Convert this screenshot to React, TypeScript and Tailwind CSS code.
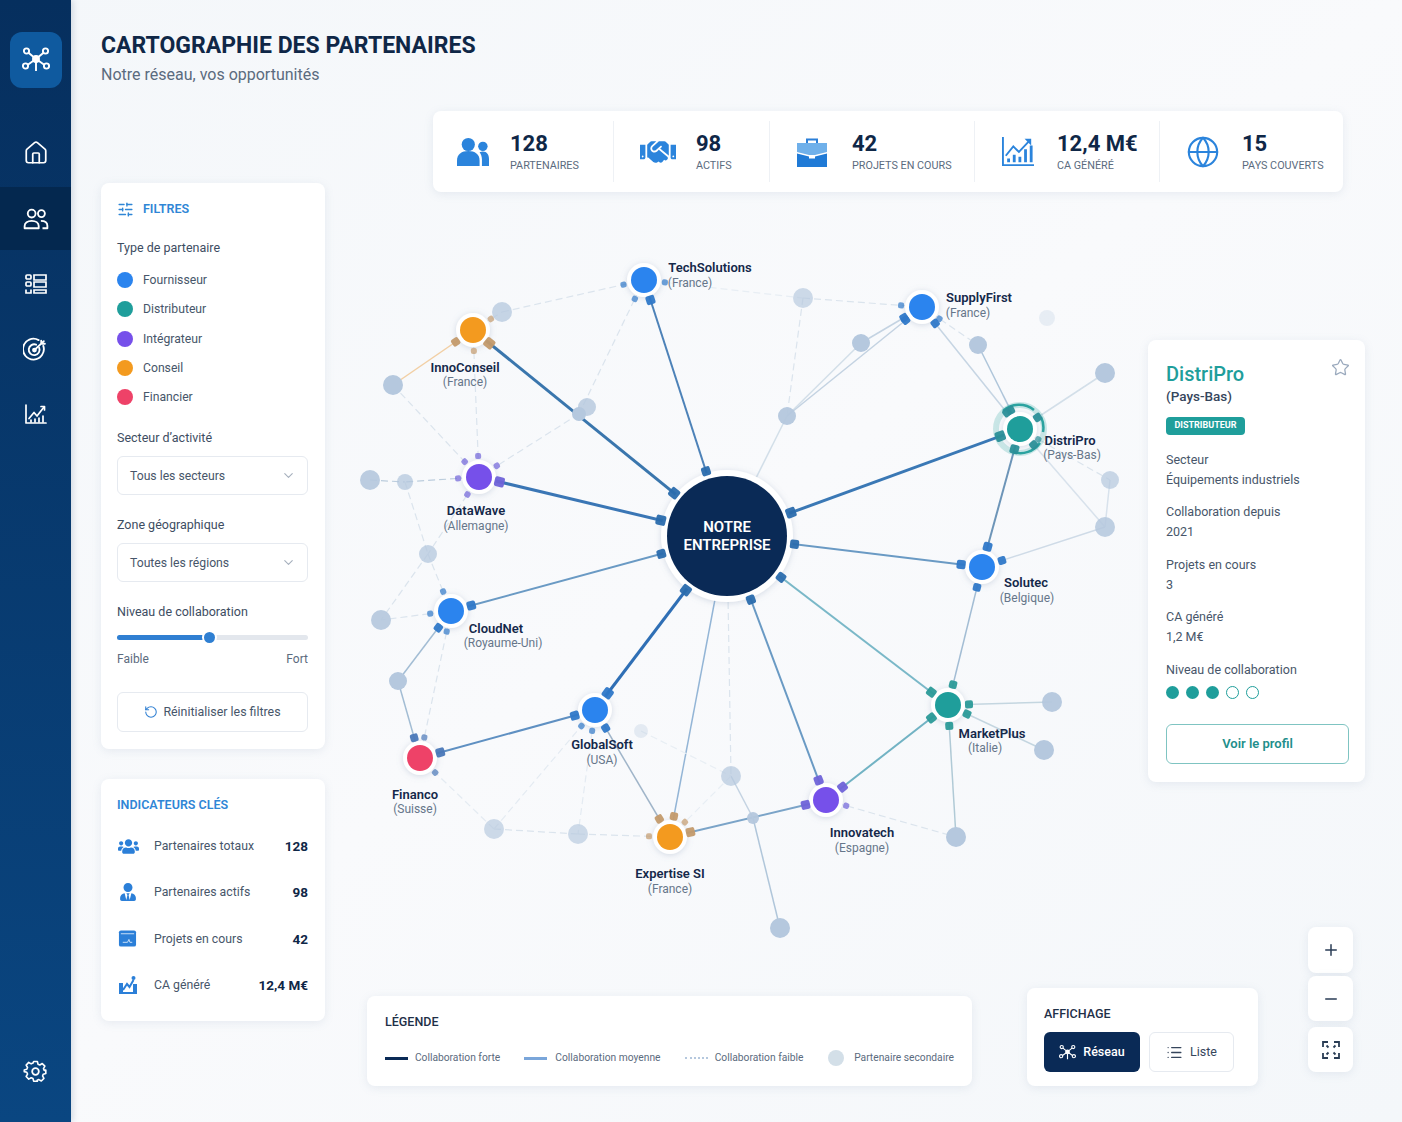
import { ChevronDown, Globe, Home, List, Minus, Plus, RotateCcw, SlidersHorizontal, Star } from 'lucide-react'
import { FaHandshake, FaUsers, FaUserTie } from 'react-icons/fa'
import type { ReactNode } from 'react'

type NodeId = string

interface PartnerNode {
  id: NodeId
  x: number
  y: number
  color: string
  port: string
}

const ORIGIN_X = 325
const ORIGIN_Y = 192

const partners: PartnerNode[] = [
  { id: 'tech', x: 644, y: 280, color: '#2b84ee', port: '#2f78c8' },
  { id: 'supply', x: 922, y: 307, color: '#2b84ee', port: '#2f78c8' },
  { id: 'inno', x: 473, y: 330, color: '#f39a1f', port: '#c39a6c' },
  { id: 'distri', x: 1020, y: 429, color: '#1f9e9b', port: '#2b8f98' },
  { id: 'data', x: 479, y: 477, color: '#7650ea', port: '#6f63d8' },
  { id: 'solutec', x: 982, y: 567, color: '#2b84ee', port: '#2f78c8' },
  { id: 'cloud', x: 451, y: 611, color: '#2b84ee', port: '#2f78c8' },
  { id: 'global', x: 595, y: 710, color: '#2b84ee', port: '#2f78c8' },
  { id: 'market', x: 948, y: 705, color: '#1f9e9b', port: '#2b9a98' },
  { id: 'financo', x: 420, y: 758, color: '#ee4268', port: '#4a78b8' },
  { id: 'innova', x: 826, y: 800, color: '#7650ea', port: '#6f63d8' },
  { id: 'expertise', x: 670, y: 837, color: '#f39a1f', port: '#c39a6c' },
]

// secondary partners: x, y, radius, opacity
const secondary: Record<string, [number, number, number, number]> = {
  a: [502, 312, 10, 0.75],
  b: [393, 385, 10, 1],
  c: [587, 407, 9, 0.8],
  d: [579, 414, 7, 1],
  e: [370, 480, 10, 0.9],
  f: [405, 482, 8, 0.75],
  g: [428, 554, 9, 0.75],
  h: [381, 620, 10, 0.9],
  i: [398, 681, 9, 1],
  j: [803, 298, 10, 0.65],
  k: [861, 343, 9, 1],
  l: [978, 345, 9, 1],
  m: [1105, 373, 10, 1],
  n: [787, 416, 9, 0.95],
  o: [1110, 480, 9, 0.7],
  p: [1105, 527, 10, 0.85],
  q: [1052, 702, 10, 0.95],
  r: [1044, 750, 10, 1],
  s: [956, 837, 10, 1],
  t: [731, 776, 10, 0.7],
  u: [753, 818, 6, 0.95],
  v: [641, 731, 7, 0.3],
  w: [494, 829, 10, 0.65],
  x: [578, 834, 10, 0.65],
  y: [780, 928, 10, 1],
  z: [1047, 318, 8, 0.25],
}

type Weight = 'strong' | 'medium' | 'soft' | 'faint'

const edges: [NodeId, NodeId, Weight, string?][] = [
  ['center', 'tech', 'medium', '#4d82b8'],
  ['center', 'inno', 'strong', '#3a76ad'],
  ['center', 'data', 'strong', '#3a76b5'],
  ['center', 'cloud', 'medium', '#6a9ac4'],
  ['center', 'global', 'strong', '#2f6fb5'],
  ['center', 'distri', 'strong', '#3a78b5'],
  ['center', 'solutec', 'medium', '#6a9ac4'],
  ['center', 'market', 'medium', '#7ab8c8'],
  ['center', 'innova', 'medium', '#6a9ac4'],
  ['center', 'expertise', 'soft', '#93b5d6'],
  ['financo', 'global', 'medium', '#5f90c2'],
  ['distri', 'solutec', 'medium', '#6d95b8'],
  ['solutec', 'market', 'soft', '#a3bdd4'],
  ['market', 'innova', 'medium', '#72b3c4'],
  ['expertise', 'innova', 'medium', '#7ba4c8'],
  ['expertise', 'global', 'soft', '#a0b5c9'],
  ['market', 'q', 'soft', '#c4d6e0'],
  ['market', 'r', 'soft', '#c4d6e0'],
  ['market', 's', 'soft', '#b0cad6'],
  ['innova', 's', 'faint'],
  ['cloud', 'i', 'soft', '#a3bdd4'],
  ['i', 'financo', 'soft', '#a3bdd4'],
  ['cloud', 'financo', 'faint'],
  ['cloud', 'h', 'faint'],
  ['cloud', 'g', 'faint'],
  ['g', 'h', 'faint'],
  ['data', 'f', 'faint', '#bccddd'],
  ['e', 'f', 'faint', '#bccddd'],
  ['f', 'g', 'faint'],
  ['data', 'g', 'faint'],
  ['inno', 'b', 'soft', '#f2cfa4'],
  ['inno', 'data', 'faint'],
  ['b', 'data', 'faint'],
  ['inno', 'a', 'faint'],
  ['a', 'tech', 'faint'],
  ['tech', 'd', 'faint'],
  ['d', 'data', 'faint'],
  ['tech', 'j', 'faint', '#e8eef4'],
  ['j', 'supply', 'faint'],
  ['j', 'n', 'faint'],
  ['supply', 'k', 'soft', '#c4d3e2'],
  ['k', 'n', 'soft', '#d3dfe9'],
  ['supply', 'n', 'soft', '#c4d3e2'],
  ['n', 'center', 'soft', '#d3dfe9'],
  ['supply', 'l', 'faint'],
  ['l', 'distri', 'soft', '#b0c6da'],
  ['supply', 'distri', 'soft', '#c6d5e3'],
  ['distri', 'm', 'soft', '#d3dfe9'],
  ['distri', 'o', 'faint'],
  ['distri', 'p', 'soft', '#d8e2ec'],
  ['o', 'p', 'soft', '#d8e2ec'],
  ['solutec', 'p', 'soft', '#cfdbe7'],
  ['center', 't', 'faint'],
  ['t', 'u', 'soft', '#c4d3e2'],
  ['u', 'y', 'soft', '#b0c6da'],
  ['v', 't', 'faint', '#e8eef4'],
  ['t', 'expertise', 'faint', '#e8eef4'],
  ['global', 'x', 'faint', '#e4ebf2'],
  ['w', 'x', 'faint'],
  ['x', 'expertise', 'faint'],
  ['w', 'financo', 'faint', '#e4ebf2'],
  ['w', 'global', 'faint', '#e4ebf2'],
]

const edgeStyles: Record<Weight, { width: number; color: string; dash?: string }> = {
  strong: { width: 3, color: '#2f6fae' },
  medium: { width: 2, color: '#6a9ac4' },
  soft: { width: 1.5, color: '#a3bdd4' },
  faint: { width: 1.2, color: '#dbe4ed', dash: '7 4' },
}

const labels: { text: string; x: number; y: number; sub?: boolean }[] = [
  { text: 'TechSolutions', x: 710, y: 267 },
  { text: '(France)', x: 690, y: 283, sub: true },
  { text: 'SupplyFirst', x: 979, y: 297 },
  { text: '(France)', x: 968, y: 313, sub: true },
  { text: 'InnoConseil', x: 465, y: 367 },
  { text: '(France)', x: 465, y: 382, sub: true },
  { text: 'DataWave', x: 476, y: 510 },
  { text: '(Allemagne)', x: 476, y: 526, sub: true },
  { text: 'DistriPro', x: 1070, y: 440 },
  { text: '(Pays-Bas)', x: 1072, y: 455, sub: true },
  { text: 'Solutec', x: 1026, y: 582 },
  { text: '(Belgique)', x: 1027, y: 598, sub: true },
  { text: 'CloudNet', x: 496, y: 628 },
  { text: '(Royaume-Uni)', x: 503, y: 643, sub: true },
  { text: 'GlobalSoft', x: 602, y: 744 },
  { text: '(USA)', x: 602, y: 760, sub: true },
  { text: 'MarketPlus', x: 992, y: 733 },
  { text: '(Italie)', x: 985, y: 748, sub: true },
  { text: 'Financo', x: 415, y: 794 },
  { text: '(Suisse)', x: 415, y: 809, sub: true },
  { text: 'Innovatech', x: 862, y: 832 },
  { text: '(Espagne)', x: 862, y: 848, sub: true },
  { text: 'Expertise SI', x: 670, y: 873 },
  { text: '(France)', x: 670, y: 889, sub: true },
]

function locate(id: NodeId): { x: number; y: number; r: number; primary: boolean; port: string } {
  if (id === 'center') return { x: 727, y: 536, r: 68, primary: true, port: '#2a6cad' }
  const partner = partners.find((p) => p.id === id)
  if (partner) return { x: partner.x, y: partner.y, r: 21, primary: true, port: partner.port }
  const [x, y, r] = secondary[id]
  return { x, y, r, primary: false, port: '#b5c8de' }
}

function NetworkIcon({ className }: { className?: string }) {
  return (
    <svg viewBox="0 0 28 28" fill="none" stroke="currentColor" strokeWidth="1.9" className={className}>
      <circle cx="14" cy="13" r="3" fill="currentColor" />
      <circle cx="4.5" cy="5" r="2.6" />
      <circle cx="23.5" cy="5" r="2.6" />
      <circle cx="3.5" cy="20" r="2.6" />
      <circle cx="24.5" cy="20" r="2.6" />
      <path d="M6.5 6.7 11.6 11M21.5 6.7 16.4 11M5.8 18.8 11.4 14.8M22.2 18.8 16.6 14.8M14 16v9" />
    </svg>
  )
}

function PeopleIcon() {
  return (
    <svg viewBox="0 0 24 24" fill="none" stroke="currentColor" strokeWidth="1.7" strokeLinejoin="round" className="h-[26px] w-[26px]">
      <circle cx="8" cy="7" r="3.6" />
      <circle cx="17" cy="7" r="3.2" />
      <path d="M1.500 20.500v-2c0-3 2.700-4.800 6.500-4.800s6.500 1.800 6.500 4.800v2z" />
      <path d="M16.500 13.700c3.500 0 6 1.500 6 4.500v2.300h-4.500" />
    </svg>
  )
}

function ChecklistIcon() {
  return (
    <svg viewBox="0 0 24 24" fill="none" stroke="currentColor" strokeWidth="1.7" className="h-[24px] w-[24px]">
      <rect x="2" y="3" width="5" height="4" rx="1" />
      <rect x="2" y="10" width="5" height="4" rx="1" />
      <path d="M2 17.5V21h5v-3.5" />
      <path d="M10 3h12v5H10zM10 10h12v5H10zM10 18h12v3H10z" />
    </svg>
  )
}

function TargetIcon() {
  return (
    <svg viewBox="0 0 24 24" fill="none" stroke="currentColor" strokeWidth="1.8" strokeLinecap="round" className="h-[25px] w-[25px]">
      <path d="M19.500 8.500A10 10 0 1 1 15 3" />
      <path d="M15.500 10.200A5.200 5.200 0 1 1 12.600 7.400" />
      <circle cx="11" cy="12.500" r="1.400" />
      <path d="M11 12.500 20 4M17.500 3.500V6.500H21" />
    </svg>
  )
}

function GrowthIcon() {
  return (
    <svg viewBox="0 0 24 24" fill="none" stroke="currentColor" strokeWidth="1.7" strokeLinecap="round" strokeLinejoin="round" className="h-[24px] w-[24px]">
      <path d="M2 3v18h20" />
      <path d="M5 16.500 10 10.500l3 3.500 7-9" />
      <path d="M20.500 8V4.500H17" />
      <path d="M7 20v-2M11 20v-3M15 20v-4M19 20v-6" />
    </svg>
  )
}

function PartnersIcon() {
  return (
    <svg viewBox="0 0 36 34" className="h-[32px] w-[34px]" fill="#2b84dc">
      <circle cx="13" cy="9" r="7" />
      <path d="M1 32v-6c0-6.500 5-10 12-10s12 3.500 12 10v6z" />
      <circle cx="28.500" cy="11" r="5" />
      <path d="M25 17.200c1.200-.5 2.300-.7 3.500-.7 4.300 0 6.500 3.500 6.500 8V32h-7.500v-7c0-3-1-5.700-2.500-7.800z" />
    </svg>
  )
}

function BriefcaseIcon() {
  return (
    <svg viewBox="0 0 32 32" className="h-[34px] w-[32px]">
      <path d="M11 7V3.500h10V7" fill="none" stroke="#2b7fd8" strokeWidth="2" />
      <path d="M1 7h30v9l-12 3h-6L1 16z" fill="#6fb0ea" />
      <path d="M1 17.500 13 20.500v2h6v-2l12-3V31H1z" fill="#1f7ad6" />
    </svg>
  )
}

function ChartIcon() {
  return (
    <svg viewBox="0 0 36 34" fill="none" className="h-[32px] w-[34px]">
      <path d="M2 1v30h33" stroke="#2b84dc" strokeWidth="2" />
      <path d="M5 21 13 11l6 6L31 4" stroke="#2b84dc" strokeWidth="2" />
      <path d="M25 3h7v7z" fill="#2b84dc" />
      <path d="M8 28v-4M14 28v-8M20 28v-6M26 28V14M32 28V10" stroke="#2b84dc" strokeWidth="3" />
    </svg>
  )
}

function ProjectIcon() {
  return (
    <svg viewBox="0 0 20 20" className="h-[19px] w-[19px]">
      <rect x="1" y="1.500" width="18" height="17" rx="2" fill="#2b7fd8" />
      <path d="M3 5h14" stroke="#cfe3f8" strokeWidth="1" />
      <path d="M5 14h5l1.500-3 1 3H15" stroke="#cfe3f8" strokeWidth="1" fill="none" />
    </svg>
  )
}

function RevenueIcon() {
  return (
    <svg viewBox="0 0 20 20" className="h-[20px] w-[20px]">
      <path d="M1 8h4v11H1zM15 9h4v10h-4z" fill="#2b7fd8" />
      <path d="M5 15 9 9l2.500 3 4-7" stroke="#2b7fd8" strokeWidth="2" fill="none" />
      <circle cx="15.500" cy="3" r="2" fill="#2b7fd8" />
      <path d="M3 19v-2h14v2z" fill="#2b7fd8" />
    </svg>
  )
}

function ExpandIcon() {
  return (
    <svg viewBox="0 0 18 18" fill="none" stroke="#2a3d55" strokeWidth="1.8" className="h-[18px] w-[18px]">
      <path d="M1 6V1h5M12 1h5v5M17 12v5h-5M6 17H1v-5" />
      <path d="M6.500 6.500 4.500 4.500M11.500 6.500l2-2M11.500 11.500l2 2M6.500 11.500l-2 2" />
    </svg>
  )
}

function Card({ className, children }: { className: string; children: ReactNode }) {
  return <div className={`rounded-lg bg-white shadow-[0_2px_10px_rgba(120,140,170,0.14)] ${className}`}>{children}</div>
}

function Stat({ icon, value, label, first, last }: { icon: ReactNode; value: string; label: string; first?: boolean; last?: boolean }) {
  return (
    <div className={`flex items-center ${first ? 'pl-[23px]' : 'pl-[26px]'} ${last ? '' : 'border-r border-[#eef1f5]'}`}>
      <div className={`flex shrink-0 items-center ${first ? 'w-[54px]' : 'w-[56px]'}`}>{icon}</div>
      <div className="flex flex-col">
        <span className="text-[22px] font-bold leading-[28px] text-[#0f2747]">{value}</span>
        <span className="mt-[1px] text-[10.8px] leading-[14px] text-[#5b6b7e] whitespace-nowrap">{label}</span>
      </div>
    </div>
  )
}

function SelectBox({ label }: { label: string }) {
  return (
    <div className="mt-[10px] flex h-[39px] items-center justify-between rounded-md border border-[#e6eaf0] pl-[12px] pr-[11px] text-[12.2px] text-[#47566a]">
      {label}
      <ChevronDown className="h-[15px] w-[15px] text-[#a6b0bd]" strokeWidth={1.8} />
    </div>
  )
}

function NetworkGraph() {
  return (
    <div className="relative h-[746px] w-[823px] shrink-0">
      <svg viewBox={`${ORIGIN_X} ${ORIGIN_Y} 823 746`} className="absolute inset-0 h-[746px] w-[823px] overflow-visible">
        <defs>
          <filter id="halo" x="-50%" y="-50%" width="200%" height="200%">
            <feDropShadow dx="0" dy="1" stdDeviation="3" floodColor="#7a90ad" floodOpacity="0.3" />
          </filter>
          <filter id="soft" x="-30%" y="-30%" width="160%" height="160%">
            <feGaussianBlur stdDeviation="0.6" />
          </filter>
        </defs>
        {edges.map(([from, to, weight, color], i) => {
          const a = locate(from)
          const b = locate(to)
          const style = edgeStyles[weight]
          return (
            <line
              key={i}
              x1={a.x}
              y1={a.y}
              x2={b.x}
              y2={b.y}
              stroke={color ?? style.color}
              strokeWidth={style.width}
              strokeDasharray={style.dash}
            />
          )
        })}
        {Object.entries(secondary).map(([id, [x, y, r, opacity]]) => (
          <circle key={id} cx={x} cy={y} r={r} fill="#b5c8de" opacity={opacity} filter="url(#soft)" />
        ))}
        <circle cx="1020" cy="429" r="24" fill="none" stroke="#1f9e9b" strokeOpacity="0.22" strokeWidth="6" />
        <path d="M1003 411a24 24 0 0 1 31-1M1041 417a24 24 0 0 1 2 15M1040 443a24 24 0 0 1-27 9" fill="none" stroke="#2ba3a0" strokeWidth="2.500" />
        {partners.map((p) => (
          <g key={p.id}>
            <circle cx={p.x} cy={p.y} r="17" fill="white" filter="url(#halo)" />
            <circle cx={p.x} cy={p.y} r="13" fill={p.color} />
          </g>
        ))}
        <circle cx="727" cy="536" r="66" fill="white" filter="url(#halo)" />
        <circle cx="727" cy="536" r="60" fill="#0a2a56" />
        {edges.flatMap(([from, to, weight], i) =>
          [
            [from, to],
            [to, from],
          ].map(([here, there], j) => {
            const a = locate(here)
            const b = locate(there)
            if (!a.primary) return null
            if (here === 'center' && (weight === 'faint' || weight === 'soft')) return null
            const len = Math.hypot(b.x - a.x, b.y - a.y)
            const px = a.x + ((b.x - a.x) / len) * a.r
            const py = a.y + ((b.y - a.y) / len) * a.r
            const size = weight === 'strong' ? 10 : weight === 'medium' ? 9 : weight === 'soft' ? 8 : 6
            const angle = (Math.atan2(b.y - a.y, b.x - a.x) * 180) / Math.PI
            return (
              <rect
                key={`${i}-${j}`}
                x={px - size / 2}
                y={py - size / 2}
                width={size}
                height={size}
                rx="2"
                fill={here === 'center' ? '#2a6cad' : a.port}
                opacity={weight === 'faint' ? 0.7 : 0.95}
                transform={`rotate(${angle} ${px} ${py})`}
              />
            )
          }),
        )}
      </svg>
      <div className="absolute left-[402px] top-[344px] -translate-x-1/2 -translate-y-1/2 text-center text-[15px] font-semibold leading-[18px] text-white whitespace-nowrap">
        <div>NOTRE</div>
        <div>ENTREPRISE</div>
      </div>
      {labels.map((label) => (
        <span
          key={`${label.text}${label.x}`}
          className={
            label.sub
              ? 'absolute -translate-x-1/2 -translate-y-1/2 text-[12px] leading-none text-[#66768a] whitespace-nowrap'
              : 'absolute -translate-x-1/2 -translate-y-1/2 text-[13px] font-semibold leading-none text-[#14284a] whitespace-nowrap'
          }
          style={{ left: label.x - ORIGIN_X, top: label.y - ORIGIN_Y }}
        >
          {label.text}
        </span>
      ))}
    </div>
  )
}

function DetailField({ label, value }: { label: string; value: string }) {
  return (
    <div className="mt-[12.500px] text-[12.5px] leading-[20px] text-[#47566a]">
      <div>{label}</div>
      <div>{value}</div>
    </div>
  )
}

export default function App() {
  return (
    <div className="flex h-[1122px] w-[1402px] overflow-hidden bg-gradient-to-br from-[#f4f7fa] via-[#f9fafc] to-[#f4f7fa] font-['Roboto',sans-serif]">
      <aside className="flex w-[71px] shrink-0 flex-col items-center bg-gradient-to-b from-[#062f5e] to-[#0a4681] pb-[38px] pt-[32px] text-white shadow-[2px_0_6px_rgba(10,40,80,0.15)]">
        <div className="flex h-[56px] w-[52px] items-center justify-center rounded-xl bg-[#0f5a9f]">
          <NetworkIcon className="h-[28px] w-[28px]" />
        </div>
        <nav className="mt-[31px] flex w-full flex-col items-center">
          <div className="flex h-[68px] w-full items-center justify-center">
            <Home className="h-[26px] w-[26px]" strokeWidth={1.6} />
          </div>
          <div className="flex h-[63px] w-full items-center justify-center bg-[#04284f]">
            <PeopleIcon />
          </div>
          <div className="flex h-[68px] w-full items-center justify-center">
            <ChecklistIcon />
          </div>
          <div className="flex h-[62px] w-full items-center justify-center">
            <TargetIcon />
          </div>
          <div className="flex h-[68px] w-full items-center justify-center">
            <GrowthIcon />
          </div>
        </nav>
        <svg viewBox="0 0 24 24" fill="none" stroke="currentColor" strokeWidth="1.7" strokeLinejoin="round" className="mt-auto h-[25px] w-[25px]">
          <circle cx="12" cy="12" r="3.200" />
          <path d="M10 2h4l.7 2.900 1.900.8 2.600-1.500 2.800 2.800-1.500 2.600.8 1.900L23 11.200v3.600l-2.700.7-.8 1.900 1.500 2.600-2.800 2.800-2.600-1.500-1.900.8L14 23h-4l-.7-2.900-1.900-.8-2.600 1.500L2 18l1.500-2.600-.8-1.900L0 12.800V11l2.700-.7.8-1.900L2 5.800 4.800 3l2.600 1.500 1.900-.8z" transform="translate(1.200 .6) scale(.9)" />
        </svg>
      </aside>

      <main className="flex min-w-0 flex-1 flex-col pl-[30px]">
        <header className="h-[111px] shrink-0 pt-[32px]">
          <h1 className="text-[23px] font-bold leading-[28px] text-[#0f2747]">CARTOGRAPHIE DES PARTENAIRES</h1>
          <p className="mt-[3px] text-[16px] leading-[24px] text-[#5b6b7e]">Notre réseau, vos opportunités</p>
        </header>

        <div className="flex min-h-0 flex-1">
          <div className="flex w-[224px] shrink-0 flex-col gap-[30px] pt-[72px]">
            <Card className="h-[566px] pl-[16px] pr-[17px] pt-[18px]">
              <div className="flex h-[17px] items-center gap-[9px] text-[12.5px] font-semibold text-[#2f86d6]">
                <SlidersHorizontal className="h-[17px] w-[17px]" strokeWidth={1.9} />
                FILTRES
              </div>
              <div className="mt-[22px] text-[12.5px] leading-[16px] text-[#3d4d62]">Type de partenaire</div>
              <ul className="mt-[16px] flex flex-col gap-[13.300px] text-[12.2px] leading-[16px] text-[#47566a]">
                {[
                  ['Fournisseur', 'bg-[#2b84ee]'],
                  ['Distributeur', 'bg-[#1f9e9b]'],
                  ['Intégrateur', 'bg-[#7650ea]'],
                  ['Conseil', 'bg-[#f39a1f]'],
                  ['Financier', 'bg-[#ee4268]'],
                ].map(([name, dot]) => (
                  <li key={name} className="flex items-center gap-[10px]">
                    <span className={`h-[16px] w-[16px] rounded-full ${dot}`} />
                    {name}
                  </li>
                ))}
              </ul>
              <div className="mt-[25px] text-[12.5px] leading-[16px] text-[#3d4d62]">Secteur d’activité</div>
              <SelectBox label="Tous les secteurs" />
              <div className="mt-[22px] text-[12.5px] leading-[16px] text-[#3d4d62]">Zone géographique</div>
              <SelectBox label="Toutes les régions" />
              <div className="mt-[22px] text-[12.5px] leading-[16px] text-[#3d4d62]">Niveau de collaboration</div>
              <div className="relative mt-[15px] h-[5px] rounded-full bg-[#e3e7ed]">
                <div className="h-[5px] w-[92px] rounded-full bg-[#2f7fd2]" />
                <div className="absolute left-[87px] top-[-3px] h-[11px] w-[11px] rounded-full bg-[#2f7fd2] shadow-[0_0_0_2px_white]" />
              </div>
              <div className="mt-[11px] flex justify-between text-[12px] leading-[16px] text-[#5b6b7e]">
                <span>Faible</span>
                <span>Fort</span>
              </div>
              <div className="mt-[25px] flex h-[40px] items-center justify-center gap-[5px] rounded-md border border-[#e6eaf0] text-[12.4px] text-[#47566a]">
                <RotateCcw className="h-[14px] w-[14px] text-[#2f7fd2]" strokeWidth={1.8} />
                Réinitialiser les filtres
              </div>
            </Card>

            <Card className="h-[242px] pl-[16px] pr-[17px] pt-[18px]">
              <div className="text-[12.5px] font-semibold leading-[16px] text-[#2f86d6]">INDICATEURS CLÉS</div>
              <div className="mt-[10px] flex flex-col">
                {[
                  [<FaUsers key="a" className="h-[19px] w-[21px] text-[#2b7fd8]" />, 'Partenaires totaux', '128'],
                  [<FaUserTie key="b" className="ml-[1px] h-[18px] w-[18px] text-[#2b7fd8]" />, 'Partenaires actifs', '98'],
                  [<ProjectIcon key="c" />, 'Projets en cours', '42'],
                  [<RevenueIcon key="d" />, 'CA généré', '12,4 M€'],
                ].map(([icon, name, value]) => (
                  <div key={name as string} className="flex h-[46.300px] items-center text-[12.25px] text-[#47566a]">
                    <span className="flex w-[37px] shrink-0 items-center pl-[1px]">{icon}</span>
                    <span className="flex-1">{name}</span>
                    <span className="text-[13.5px] font-bold text-[#0f2747]">{value}</span>
                  </div>
                ))}
              </div>
            </Card>
          </div>

          <div className="flex min-w-0 flex-1 flex-col">
            <Card className="ml-[108px] grid h-[81px] w-[910px] shrink-0 grid-cols-[181px_156px_205px_185px_183px] items-stretch py-[10px]">
              <Stat icon={<PartnersIcon />} value="128" label="PARTENAIRES" first />
              <Stat icon={<FaHandshake className="h-[32px] w-[36px] text-[#2b84dc]" />} value="98" label="ACTIFS" />
              <Stat icon={<BriefcaseIcon />} value="42" label="PROJETS EN COURS" />
              <Stat icon={<ChartIcon />} value="12,4 M€" label="CA GÉNÉRÉ" />
              <Stat icon={<Globe className="h-[34px] w-[34px] text-[#2b84dc]" strokeWidth={1.5} />} value="15" label="PAYS COUVERTS" last />
            </Card>

            <div className="flex h-[746px] shrink-0">
              <NetworkGraph />
              <Card className="mt-[148px] flex h-[442px] w-[217px] shrink-0 flex-col pl-[18px] pr-[16px] pt-[20px]">
                <div className="flex items-start justify-between">
                  <div>
                    <div className="text-[20px] font-medium leading-[28px] text-[#1f9e9b]">DistriPro</div>
                    <div className="text-[13.5px] font-medium leading-[17px] text-[#36465c]">(Pays-Bas)</div>
                  </div>
                  <Star className="mr-[-1px] mt-[-2px] h-[19px] w-[19px] text-[#9aa9bd]" strokeWidth={1.6} />
                </div>
                <span className="mt-[12px] flex h-[18px] w-[79px] items-center justify-center rounded-[4px] bg-[#1f9e9b] text-[9px] font-bold text-white">
                  DISTRIBUTEUR
                </span>
                <div className="mt-[2px]">
                  <DetailField label="Secteur" value="Équipements industriels" />
                  <DetailField label="Collaboration depuis" value="2021" />
                  <DetailField label="Projets en cours" value="3" />
                  <DetailField label="CA généré" value="1,2 M€" />
                </div>
                <div className="mt-[12.500px] text-[12.5px] leading-[20px] text-[#47566a]">Niveau de collaboration</div>
                <div className="mt-[6px] flex items-center gap-[7px]">
                  <span className="h-[13px] w-[13px] rounded-full bg-[#1f9e9b]" />
                  <span className="h-[13px] w-[13px] rounded-full bg-[#1f9e9b]" />
                  <span className="h-[13px] w-[13px] rounded-full bg-[#1f9e9b]" />
                  <span className="h-[13px] w-[13px] rounded-full border-[1.5px] border-[#1f9e9b]" />
                  <span className="h-[13px] w-[13px] rounded-full border-[1.5px] border-[#1f9e9b]" />
                </div>
                <div className="mt-[25px] flex h-[40px] items-center justify-center rounded-md border border-[#7fc4c2] text-[13px] font-semibold text-[#1f8f8c]">
                  Voir le profil
                </div>
              </Card>
            </div>

            <div className="mt-[-10px] flex h-[158px] shrink-0 items-end">
              <Card className="ml-[42px] h-[90px] w-[605px] px-[18px] pt-[18px]">
                <div className="text-[12.5px] font-medium leading-[16px] text-[#1f3048]">LÉGENDE</div>
                <div className="mt-[20px] flex h-[16px] items-center text-[10.25px] text-[#5b6b7e] whitespace-nowrap">
                  <span className="h-[3px] w-[23px] bg-[#0a2a56]" />
                  <span className="ml-[7px] w-[110px]">Collaboration forte</span>
                  <span className="h-[3px] w-[23px] bg-[#7aa6da]" />
                  <span className="ml-[8px] w-[130px]">Collaboration moyenne</span>
                  <span className="h-0 w-[23px] border-t-2 border-dotted border-[#b5c8de]" />
                  <span className="ml-[7px] w-[114px]">Collaboration faible</span>
                  <span className="h-[16px] w-[16px] rounded-full bg-[#d3dfe8]" />
                  <span className="ml-[10px]">Partenaire secondaire</span>
                </div>
              </Card>
              <Card className="ml-[55px] h-[98px] w-[231px] px-[17px] pt-[18px]">
                <div className="text-[12.5px] font-medium leading-[16px] text-[#1f3048]">AFFICHAGE</div>
                <div className="mt-[10px] flex gap-[9px] text-[12.5px]">
                  <div className="flex h-[40px] w-[96px] items-center justify-center gap-[7px] rounded-md bg-[#0a2a56] font-medium text-white">
                    <NetworkIcon className="h-[17px] w-[17px]" />
                    Réseau
                  </div>
                  <div className="flex h-[40px] w-[85px] items-center justify-center gap-[7px] rounded-md border border-[#e6eaf0] text-[#36465c]">
                    <List className="h-[17px] w-[17px]" strokeWidth={1.8} />
                    Liste
                  </div>
                </div>
              </Card>
              <div className="mb-[14px] ml-[50px] flex flex-col gap-[3px]">
                <Card className="flex h-[46px] w-[45px] items-center justify-center">
                  <Plus className="h-[18px] w-[18px] text-[#2a3d55]" strokeWidth={2} />
                </Card>
                <Card className="flex h-[45px] w-[45px] items-center justify-center">
                  <Minus className="h-[18px] w-[18px] text-[#2a3d55]" strokeWidth={2} />
                </Card>
                <Card className="mt-[3px] flex h-[45px] w-[45px] items-center justify-center">
                  <ExpandIcon />
                </Card>
              </div>
            </div>
          </div>
        </div>
      </main>
    </div>
  )
}
